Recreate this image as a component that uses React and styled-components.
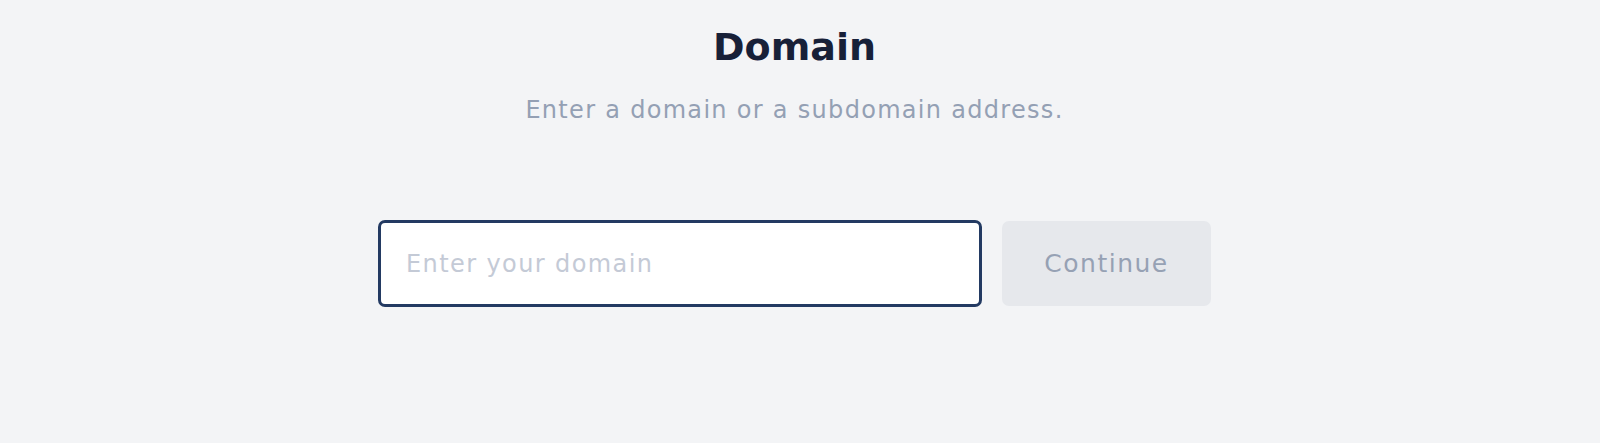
import React from 'react'
import styled, { createGlobalStyle } from 'styled-components'

const GlobalStyle = createGlobalStyle`
  *, *::before, *::after {
    box-sizing: border-box;
  }
  body {
    margin: 0;
    background: #f3f4f6;
    font-family: "DejaVu Sans", sans-serif;
  }
`

const Page = styled.main`
  min-height: 443px;
  display: flex;
  flex-direction: column;
  align-items: center;
  padding: 27px 11px 0 0;
`

const Title = styled.h1`
  margin: 0;
  font-size: 38px;
  line-height: 40px;
  font-weight: 700;
  color: #172038;
`

const Subtitle = styled.p`
  margin: 28px 0 0;
  font-size: 24px;
  line-height: 30px;
  letter-spacing: 1.3px;
  color: #94a0b4;
`

const Form = styled.form`
  display: flex;
  gap: 20px;
  margin-top: 95px;
`

const Input = styled.input`
  width: 604px;
  height: 87px;
  padding: 0 25px;
  border: 3px solid #233a62;
  border-radius: 7px;
  background: #ffffff;
  font-family: inherit;
  font-size: 24px;
  letter-spacing: 1.4px;
  color: #172038;
  outline: none;

  &::placeholder {
    color: #c4cad6;
  }
`

const Button = styled.button`
  width: 209px;
  height: 85px;
  margin-top: 1px;
  border: none;
  border-radius: 7px;
  background: #e6e8ec;
  color: #96a1b4;
  font-family: inherit;
  font-size: 25px;
  letter-spacing: 1.5px;
  cursor: not-allowed;
`

export default function App() {
  return (
    <>
      <GlobalStyle />
      <Page>
        <Title>Domain</Title>
        <Subtitle>Enter a domain or a subdomain address.</Subtitle>
        <Form onSubmit={e => e.preventDefault()}>
          <Input placeholder="Enter your domain" />
          <Button type="submit" disabled>Continue</Button>
        </Form>
      </Page>
    </>
  )
}
